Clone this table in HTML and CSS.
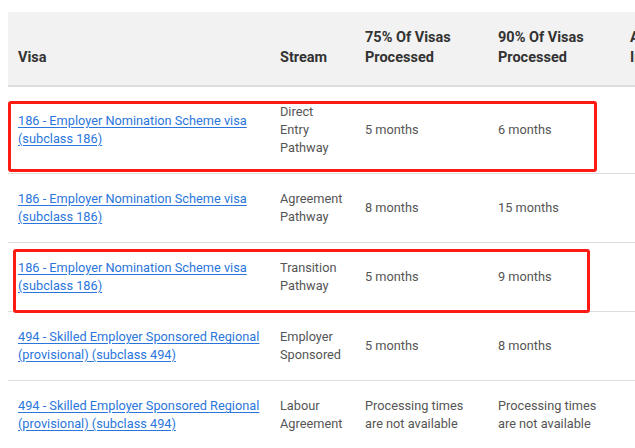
FILE: index.html
```html
<!DOCTYPE html>
<html>
<head>
<meta charset="utf-8">
<link rel="stylesheet" href="styles.css">
</head>
<body>
<div class="wrap">
<table class="visa-table">
  <colgroup>
    <col class="c1"><col class="c2"><col class="c3"><col class="c4"><col class="c5">
  </colgroup>
  <thead>
    <tr>
      <th>Visa</th>
      <th>Stream</th>
      <th>75% Of Visas Processed</th>
      <th>90% Of Visas Processed</th>
      <th>Applications In Progress</th>
    </tr>
  </thead>
  <tbody>
    <tr>
      <td><a href="#">186 - Employer Nomination Scheme visa (subclass 186)</a></td>
      <td>Direct Entry Pathway</td>
      <td>5 months</td>
      <td>6 months</td>
      <td></td>
    </tr>
    <tr>
      <td><a href="#">186 - Employer Nomination Scheme visa (subclass 186)</a></td>
      <td>Agreement Pathway</td>
      <td>8 months</td>
      <td>15 months</td>
      <td></td>
    </tr>
    <tr>
      <td><a href="#">186 - Employer Nomination Scheme visa (subclass 186)</a></td>
      <td>Transition Pathway</td>
      <td>5 months</td>
      <td>9 months</td>
      <td></td>
    </tr>
    <tr>
      <td><a href="#">494 - Skilled Employer Sponsored Regional (provisional) (subclass 494)</a></td>
      <td>Employer Sponsored</td>
      <td>5 months</td>
      <td>8 months</td>
      <td></td>
    </tr>
    <tr>
      <td><a href="#">494 - Skilled Employer Sponsored Regional (provisional) (subclass 494)</a></td>
      <td>Labour Agreement</td>
      <td>Processing times are not available</td>
      <td>Processing times are not available</td>
      <td></td>
    </tr>
  </tbody>
</table>
<div class="mark mark-1"></div>
<div class="mark mark-2"></div>
</div>
</body>
</html>
```

FILE: styles.css
```css
html, body {
  margin: 0;
  padding: 0;
  background: #fff;
  overflow: hidden;
}
body {
  width: 635px;
  height: 448px;
  font-family: Roboto, "Liberation Sans", sans-serif;
}
.wrap {
  position: relative;
  padding: 12px 0 0 8px;
}
.visa-table {
  border-collapse: collapse;
  table-layout: fixed;
  width: 712px;
}
.c1 { width: 262px; }
.c2 { width: 85px; }
.c3 { width: 133px; }
.c4 { width: 132px; }
.c5 { width: 100px; }
.visa-table th {
  background: #f2f2f2;
  color: #333;
  font-size: 14.5px;
  font-weight: 700;
  line-height: 20px;
  text-align: left;
  vertical-align: bottom;
  padding: 16px 10px 17px;
  border-bottom: 2px solid #ddd;
}
.visa-table td {
  color: #555;
  font-size: 12.75px;
  line-height: 18px;
  vertical-align: middle;
  padding: 16px 10px;
  border-bottom: 1px solid #ddd;
}
.visa-table td:nth-child(2) {
  padding-right: 12px;
}
.visa-table a {
  color: #2a76dc;
  text-decoration: underline;
  text-underline-offset: 2px;
}
.mark {
  position: absolute;
  border: 3px solid #fb1b12;
  border-radius: 3px;
  box-sizing: border-box;
}
.mark-1 {
  left: 8px;
  top: 101px;
  width: 589px;
  height: 71px;
}
.mark-2 {
  left: 13px;
  top: 249px;
  width: 577px;
  height: 64px;
}
```
